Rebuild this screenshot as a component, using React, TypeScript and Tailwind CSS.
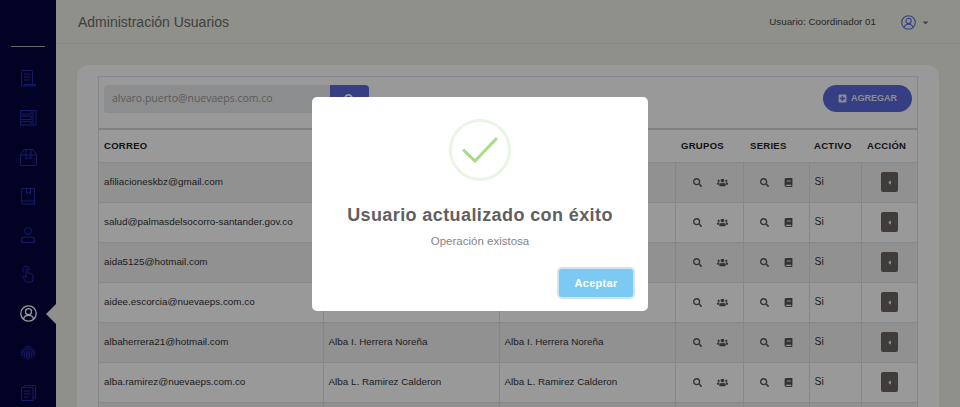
import { FaBook, FaCaretDown, FaCaretLeft, FaPlusSquare, FaSearch, FaUsers } from "react-icons/fa";

const rows = [
  { email: "afiliacioneskbz@gmail.com", name: "" },
  { email: "salud@palmasdelsocorro-santander.gov.co", name: "" },
  { email: "aida5125@hotmail.com", name: "" },
  { email: "aidee.escorcia@nuevaeps.com.co", name: "" },
  { email: "albaherrera21@hotmail.com", name: "Alba I. Herrera Noreña" },
  { email: "alba.ramirez@nuevaeps.com.co", name: "Alba L. Ramirez Calderon" },
  { email: "", name: "" },
];

function ScrollIcon() {
  return (
    <svg width="16" height="17" viewBox="0 0 16 17" fill="none" stroke="currentColor" strokeWidth="1">
      <path d="M1.5 15V1.5a1 1 0 0 1 1-1h9a1 1 0 0 1 1 1V14M4 4h6M4 7h6M4 10h6M1.5 15a1 1 0 0 0 1 1h12a1 1 0 0 0 1-1v-.5H5V15a1 1 0 0 1-1 1" />
    </svg>
  );
}

function PanelListIcon() {
  return (
    <svg width="17" height="16" viewBox="0 0 17 16" fill="none" stroke="currentColor" strokeWidth="1">
      <rect x="0.5" y="0.5" width="10.5" height="3.5" />
      <rect x="0.5" y="6" width="10.5" height="3.5" />
      <rect x="0.5" y="11.5" width="10.5" height="3.5" />
      <rect x="13" y="0.5" width="3" height="14.5" />
    </svg>
  );
}

function BoxIcon() {
  return (
    <svg width="17" height="17" viewBox="0 0 17 17" fill="none" stroke="currentColor" strokeWidth="1">
      <path d="M.5 6h16v10.500H.5zM.5 6 4 .5h9L16.500 6M6 .5V10l2.500-1.500L11 10V.5" />
    </svg>
  );
}

function BookIcon() {
  return (
    <svg width="14" height="17" viewBox="0 0 14 17" fill="none" stroke="currentColor" strokeWidth="1">
      <path d="M.5 14V1.500a1 1 0 0 1 1-1h12V13H2A1.500 1.500 0 0 0 .5 14.500 1.500 1.500 0 0 0 2 16h11.500v-3M5.500.5v5L7.500 4l2 1.500v-5" />
    </svg>
  );
}

function PersonIcon() {
  return (
    <svg width="14" height="16" viewBox="0 0 14 16" fill="none" stroke="currentColor" strokeWidth="1">
      <circle cx="7" cy="4" r="3.500" />
      <path d="M.5 15.500V12.500a2.500 2.500 0 0 1 2.500-2.500h8a2.500 2.500 0 0 1 2.500 2.500v3z" />
    </svg>
  );
}

function TapIcon() {
  return (
    <svg width="12" height="17" viewBox="0 0 12 17" fill="none" stroke="currentColor" strokeWidth="1">
      <path d="M1.600 6.500A3.600 3.600 0 1 1 7.800 4" />
      <path d="M4 6V3.500a1 1 0 0 1 2 0V7l3.500.8a1.500 1.500 0 0 1 1.500 1.500V13l-1 3H4l-3-4.500a1 1 0 0 1 1.600-1.200L4 12z" />
    </svg>
  );
}

function ActiveUserIcon() {
  return (
    <svg width="17" height="17" viewBox="0 0 17 17" fill="none" stroke="currentColor" strokeWidth="1.300">
      <circle cx="8.500" cy="8.500" r="7.700" />
      <circle cx="8.500" cy="6.700" r="3" />
      <path d="M3.500 14c.5-2.500 2.500-3.600 5-3.600s4.500 1.100 5 3.600" />
    </svg>
  );
}

function PrintIcon() {
  return (
    <svg width="16" height="16" viewBox="0 0 16 16" fill="none" stroke="currentColor" strokeWidth="0.8">
      <circle cx="8" cy="8" r="1.200" />
      <path d="M4.500 10.500V8a3.500 3.500 0 0 1 7 0v3" />
      <path d="M3 11V8a5 5 0 0 1 10 0v3.500" />
      <path d="M1.500 11V8a6.500 6.500 0 0 1 13 0v3" />
      <path d="M6.500 13.500V8a1.500 1.500 0 0 1 3 0v5.500M4.500 13v-2M11.500 13v-2M8 15V9.500M3 13.500l-1-1.500M13 13.500l1-1.500" />
    </svg>
  );
}

function DocsIcon() {
  return (
    <svg width="15" height="16" viewBox="0 0 15 16" fill="none" stroke="currentColor" strokeWidth="1">
      <path d="M.5 2.500h11.500v13H.5zM3 2.500V.5h11.500v12.500H12M3 6h6.500M3 9h6.500M3 12h4.500" />
    </svg>
  );
}

export default function App() {
  return (
    <div className="relative flex h-[407px] w-[960px] overflow-hidden bg-[#f0f0e6] font-['Liberation_Sans',sans-serif]">
      {/* Sidebar */}
      <aside className="relative flex w-[56px] shrink-0 flex-col items-center bg-[#04043f] text-[#2430a8]">
        <div className="mt-[46px] h-px w-[34px] bg-[#b4b4b4]" />
        <div className="mt-[21px] flex h-[20px] items-center justify-center"><ScrollIcon /></div>
        <div className="mt-[20px] flex h-[20px] items-center justify-center"><PanelListIcon /></div>
        <div className="mt-[19px] flex h-[20px] items-center justify-center"><BoxIcon /></div>
        <div className="mt-[19px] flex h-[20px] items-center justify-center"><BookIcon /></div>
        <div className="mt-[19px] flex h-[20px] items-center justify-center"><PersonIcon /></div>
        <div className="mt-[19px] flex h-[20px] items-center justify-center"><TapIcon /></div>
        <div className="mt-[19px] flex h-[20px] items-center justify-center text-white"><ActiveUserIcon /></div>
        <div className="mt-[20px] flex h-[20px] items-center justify-center"><PrintIcon /></div>
        <div className="mt-[20px] flex h-[20px] items-center justify-center"><DocsIcon /></div>
        <div className="absolute right-0 top-[304px] h-0 w-0 border-y-[10px] border-r-[10px] border-y-transparent border-r-[#f0f0e6]" />
      </aside>

      <main className="flex min-w-0 flex-1 flex-col">
        {/* Header */}
        <header className="flex h-[44px] shrink-0 items-center justify-between border-b border-[#e6e6dc] pl-[22px] pr-[30px] pt-[2px]">
          <h1 className="text-[14px] text-[#6b6b6b]">Administración Usuarios</h1>
          <div className="flex items-center text-[#444]">
            <span className="text-[9.8px]">Usuario: Coordinador 01</span>
            <svg width="15" height="15" viewBox="0 0 17 17" fill="none" stroke="#5566e0" strokeWidth="1.200" className="ml-[25px]">
              <circle cx="8.500" cy="8.500" r="7.700" />
              <circle cx="8.500" cy="6.700" r="3" />
              <path d="M3.500 14c.5-2.500 2.500-3.600 5-3.600s4.500 1.100 5 3.600" />
            </svg>
            <FaCaretDown size={9} className="ml-[5px] text-[#777]" />
          </div>
        </header>

        {/* Card */}
        <section className="ml-[21px] mr-[21px] mt-[21px] flex-1 rounded-t-[12px] bg-white px-[21px] pt-[11px]">
          <div className="border-x border-t border-[#dee2e6]">
            <div className="flex h-[53px] items-start justify-between border-b-2 border-[#d5d5d5] pl-[5px] pr-[5px] pt-[8px]">
              <div className="flex">
                <div className="flex h-[28px] w-[226px] items-center rounded-l-[4px] bg-[#e9ecef] px-[8px] font-['Open_Sans',sans-serif] text-[10.5px] text-[#999]">
                  alvaro.puerto@nuevaeps.com.co
                </div>
                <div className="flex h-[28px] w-[39px] items-center justify-center rounded-r-[4px] bg-[#5a68dc] text-white">
                  <FaSearch size={11} />
                </div>
              </div>
              <button className="flex h-[27px] w-[89px] items-center justify-center gap-[4px] rounded-full bg-[#5a68dc] text-[9px] font-bold text-[#e8e8f8]">
                <FaPlusSquare size={9} />
                AGREGAR
              </button>
            </div>
            <table className="w-full table-fixed border-collapse text-[#333]">
              <thead>
                <tr className="h-[32px] text-left text-[9.5px] font-bold tracking-[0.3px] text-[#222]">
                  <th className="w-[224px] pl-[5px]">CORREO</th>
                  <th className="w-[176px]" />
                  <th className="w-[176px]" />
                  <th className="w-[68px] pl-[6px]">GRUPOS</th>
                  <th className="w-[66px] pl-[7px]">SERIES</th>
                  <th className="w-[52px] pl-[5px]">ACTIVO</th>
                  <th className="pl-[6px]">ACCIÓN</th>
                </tr>
              </thead>
              <tbody>
                {rows.map((row, i) => (
                  <tr key={i} className={`h-[40px] border-t border-[#dee2e6] text-[9.85px] ${i % 2 === 0 ? "bg-[#f2f2f2]" : "bg-white"}`}>
                    <td className="truncate pl-[5px]">{row.email}</td>
                    <td className="truncate border-l border-[#dee2e6] pl-[5px]">{row.name}</td>
                    <td className="truncate border-l border-[#dee2e6] pl-[5px]">{row.name}</td>
                    <td className="border-l border-[#dee2e6]">
                      {row.email && (
                        <div className="flex items-center justify-center gap-[15px] pl-[2px] text-[#555]">
                          <FaSearch size={9} />
                          <FaUsers size={11} />
                        </div>
                      )}
                    </td>
                    <td className="border-l border-[#dee2e6]">
                      {row.email && (
                        <div className="flex items-center justify-center gap-[15px] text-[#555]">
                          <FaSearch size={9} />
                          <FaBook size={9} />
                        </div>
                      )}
                    </td>
                    <td className="border-l border-[#dee2e6] pl-[5px] text-[10.5px]">{row.email && "Si"}</td>
                    <td className="border-l border-[#dee2e6]">
                      {row.email && (
                        <div className="flex justify-center">
                          <span className="flex h-[20px] w-[17px] items-center justify-center rounded-[2px] bg-[#6a6460] text-white">
                            <FaCaretLeft size={7} />
                          </span>
                        </div>
                      )}
                    </td>
                  </tr>
                ))}
              </tbody>
            </table>
          </div>
        </section>
      </main>

      {/* Overlay and modal */}
      <div className="absolute inset-0 flex items-start justify-center bg-black/40 pt-[97px]">
        <div className="flex h-[214px] w-[336px] flex-col items-center rounded-[5px] bg-white">
          <div className="mt-[22px] flex h-[62px] w-[62px] items-center justify-center rounded-full border-[3px] border-[#eaf6e3]">
            <svg width="36" height="26" viewBox="0 0 36 26" fill="none" stroke="#a5dc86" strokeWidth="3" strokeLinecap="round">
              <path d="M2 13.500 13 24 34 2" />
            </svg>
          </div>
          <h2 className="mt-[21px] text-[18px] font-bold tracking-[0.4px] text-[#5f5f5f]">Usuario actualizado con éxito</h2>
          <p className="mt-[4px] text-[11.5px] text-[#858585]">Operación existosa</p>
          <div className="mt-[19px] flex w-full justify-end pr-[15px]">
            <button className="h-[28px] w-[74px] rounded-[3px] bg-[#7cc9f3] text-[11px] font-bold tracking-[0.3px] text-white ring-2 ring-[#cfe4f3]">
              Aceptar
            </button>
          </div>
        </div>
      </div>
    </div>
  );
}
